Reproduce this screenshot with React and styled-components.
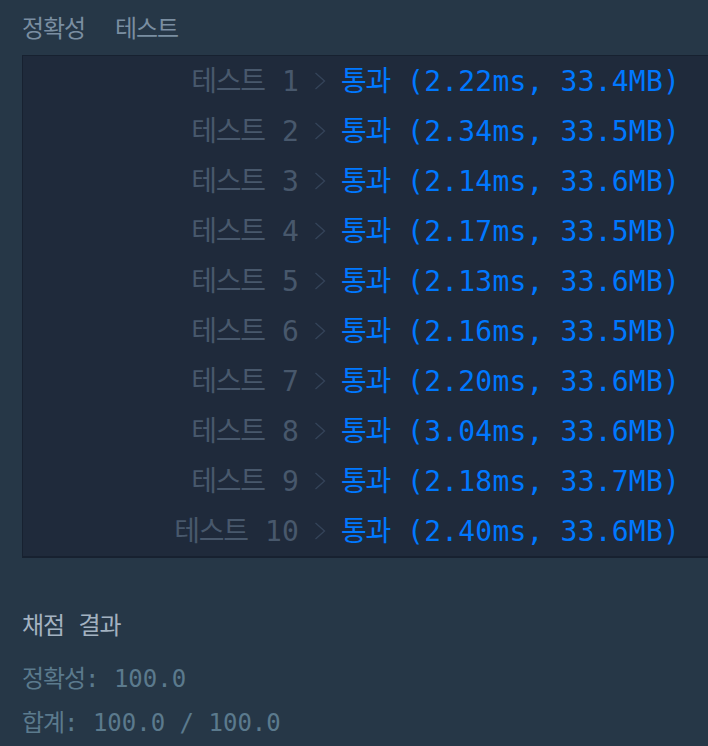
import React from 'react';
import styled, { createGlobalStyle } from 'styled-components';

const GlobalStyle = createGlobalStyle`
  html, body {
    margin: 0;
    padding: 0;
    background: #263747;
    overflow: hidden;
  }
  body {
    font-family: "DejaVu Sans Mono", "Noto Sans CJK KR", monospace;
  }
`;

const results = [
  ['2.22', '33.4'],
  ['2.34', '33.5'],
  ['2.14', '33.6'],
  ['2.17', '33.5'],
  ['2.13', '33.6'],
  ['2.16', '33.5'],
  ['2.20', '33.6'],
  ['3.04', '33.6'],
  ['2.18', '33.7'],
  ['2.40', '33.6'],
];

export default function App() {
  return (
    <Page>
      <GlobalStyle />
      <Tabs>
        <Tab><Ko>정확성</Ko></Tab>
        <Tab><Ko>테스트</Ko></Tab>
      </Tabs>
      <Panel>
        {results.map(([ms, mb], i) => (
          <Row key={i}>
            <Label>
              <Ko>테스트</Ko> {i + 1}
            </Label>
            <Chevron>
              <svg width="12" height="18" viewBox="0 0 12 18">
                <path d="M1.5 1 L10.5 9 L1.5 17" fill="none" stroke="currentColor" strokeWidth="1.3" />
              </svg>
            </Chevron>
            <Pass>
              <Ko>통과</Ko> ({ms}ms, {mb}MB)
            </Pass>
          </Row>
        ))}
      </Panel>
      <Summary>
        <Title><Ko>채점</Ko> <Ko>결과</Ko></Title>
        <Line><Ko>정확성</Ko>: 100.0</Line>
        <Line><Ko>합계</Ko>: 100.0 / 100.0</Line>
      </Summary>
    </Page>
  );
}

const Page = styled.div`
  width: 708px;
  height: 746px;
  overflow: hidden;
  padding-left: 22px;
  box-sizing: border-box;
`;

/* Noto hangul is 0.92em wide; tighten a bit to match the reference */
const Ko = styled.span`
  font-family: "Noto Sans CJK KR", sans-serif;
  font-size: 1em;
  line-height: 1;
  letter-spacing: -0.045em;
`;

const Tabs = styled.div`
  display: flex;
  align-items: center;
  height: 55px;
  gap: 30px;
  font-size: 24px;
`;

const Tab = styled.div`
  color: #7a8ea1;
  line-height: 1;
`;

const Panel = styled.div`
  width: 720px;
  background: #1f2a3b;
  border: 1px solid #172130;
  border-bottom-width: 2px;
`;

const Row = styled.div`
  display: grid;
  grid-template-columns: 276px 42px auto;
  align-items: center;
  height: 50px;
  font-size: 28px;
  letter-spacing: 0.2px;
  white-space: pre;
`;

const Label = styled.div`
  text-align: right;
  color: #48586c;
`;

const Chevron = styled.div`
  display: flex;
  justify-content: center;
  color: #35445a;
`;

const Pass = styled.div`
  color: #0078ff;
`;

const Summary = styled.div`
  margin-top: 48px;
  font-size: 24px;
  white-space: pre;
`;

const Title = styled.div`
  line-height: 40px;
  color: #a3b2c1;
  margin-bottom: 11px;
`;

const Line = styled.div`
  line-height: 44px;
  color: #5b7a8d;
`;
